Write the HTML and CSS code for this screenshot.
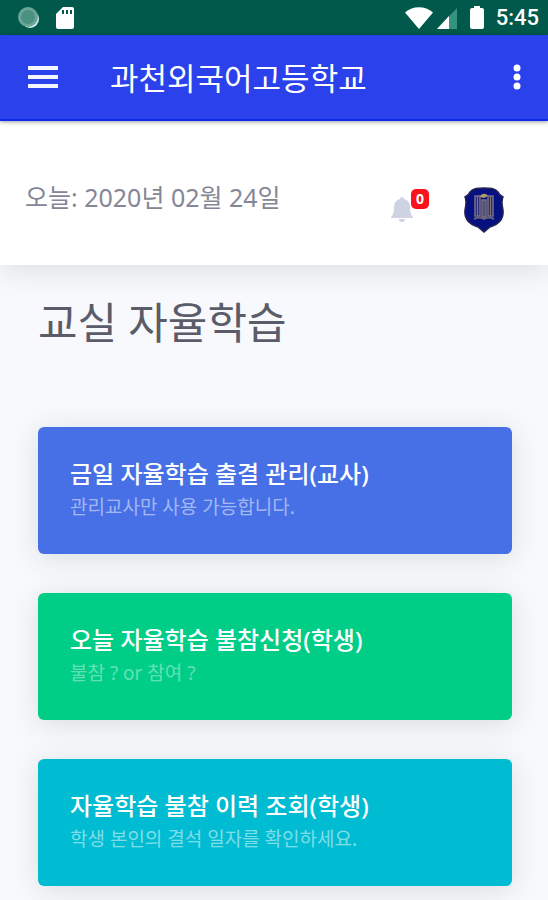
FILE: index.html
```html
<!DOCTYPE html>
<html lang="ko">
	<head>
		<meta charset="utf-8">
		<meta name="viewport" content="width=device-width, initial-scale=1">
		<title>과천외국어고등학교</title>
		<link rel="stylesheet" href="styles.css">
	</head>
	<body>
		<div class="status-bar">
			<svg class="status-icon" width="24" height="24" viewBox="0 0 24 24">
				<circle cx="13" cy="13" r="9" fill="#d3ebe6"/>
				<circle cx="11" cy="11" r="10" fill="#6aa597"/>
				<circle cx="11" cy="11" r="7" fill="#4b9080"/>
			</svg>
			<svg class="status-icon" width="20" height="24" viewBox="0 0 20 24">
				<path d="M8 1h9a2 2 0 0 1 2 2v18a2 2 0 0 1-2 2H3a2 2 0 0 1-2-2V8z" fill="#fff"/>
				<path d="M7 4h2v4H7zM11 4h2v4h-2zM15 4h2v4h-2z" fill="#00594a"/>
			</svg>
			<div class="status-right">
				<svg width="28" height="24" viewBox="0 0 28 24">
					<path d="M0 6.500C8-.5 20-.5 28 6.500L14 23z" fill="#fff"/>
				</svg>
				<svg width="20" height="24" viewBox="0 0 20 24">
					<path d="M20 2v21H0z" fill="#359480"/>
					<path d="M12 10v13H0z" fill="#fff"/>
				</svg>
				<svg class="battery" width="14" height="24" viewBox="0 0 14 24">
					<path d="M4 0h6v2h2a2 2 0 0 1 2 2v17a2 2 0 0 1-2 2H2a2 2 0 0 1-2-2V4a2 2 0 0 1 2-2h2z" fill="#fff"/>
				</svg>
				<span class="clock">5:45</span>
			</div>
		</div>

		<header class="app-bar">
			<button class="icon-button" aria-label="메뉴">
				<svg width="30" height="22" viewBox="0 0 30 22" fill="#f4f5ff">
					<path d="M0 0h30v4H0zM0 9h30v4H0zM0 18h30v4H0z"/>
				</svg>
			</button>
			<h1 class="app-title">과천외국어고등학교</h1>
			<button class="icon-button" aria-label="더보기">
				<svg width="8" height="26" viewBox="0 0 8 26" fill="#fff">
					<circle cx="4" cy="4" r="3.500"/>
					<circle cx="4" cy="13" r="3.500"/>
					<circle cx="4" cy="22" r="3.500"/>
				</svg>
			</button>
		</header>

		<div class="top-panel">
			<span class="today">오늘: 2020년 02월 24일</span>
			<button class="bell" aria-label="알림">
				<svg width="22" height="26" viewBox="0 0 22 26" fill="#ced2e2">
					<path d="M11 0c1 0 2 .8 2 2 4 1 6 4 6 8 0 6 1 8 3 10v1H0v-1c2-2 3-4 3-10 0-4 2-7 6-8 0-1.200 1-2 2-2zM8 22h6a3 3 0 0 1-6 0z"/>
				</svg>
				<span class="badge">0</span>
			</button>
			<a class="crest" href="#" aria-label="내 정보">
				<svg width="40" height="46" viewBox="0 0 40 46">
					<path d="M20 1c6 0 11 0 14 4 1 2 3 4 5 5-2 4-1 8 0 13 1 10-6 15-13 17l-6 5-6-5C7 38 0 33 1 23c1-5 2-9 0-13 2-1 4-3 5-5 3-4 8-4 14-4z" fill="#071080" stroke="#262552" stroke-width="1.500"/>
					<path d="M11 9h5v20h-5zM24 9h5v20h-5zM18 13h4v17h-4z" fill="#2c2d72" stroke="#777083" stroke-width="1.500"/>
					<path d="M13.500 10v18M20 13v17M26.500 10v18" stroke="#827976"/>
					<path d="M10 32c4-2 7-2 10 0 3-2 6-2 10 0" fill="none" stroke="#6d6579" stroke-width="2"/>
					<path d="M16 10c1-4 6-4 8-1l-4 2z" fill="#b29b62"/>
				</svg>
			</a>
		</div>

		<main class="content">
			<h2 class="page-title">교실 자율학습</h2>
			<a class="card card-blue" href="#">
				<span class="card-title">금일 자율학습 출결 관리(교사)</span>
				<span class="card-text">관리교사만 사용 가능합니다.</span>
			</a>
			<a class="card card-green" href="#">
				<span class="card-title">오늘 자율학습 불참신청(학생)</span>
				<span class="card-text">불참 ? or 참여 ?</span>
			</a>
			<a class="card card-cyan" href="#">
				<span class="card-title">자율학습 불참 이력 조회(학생)</span>
				<span class="card-text">학생 본인의 결석 일자를 확인하세요.</span>
			</a>
		</main>
	</body>
</html>
```

FILE: styles.css
```css
* {
	box-sizing: border-box;
}

body {
	margin: 0;
	background-color: #f8f9fc;
	font-family: "Noto Sans", "Noto Sans CJK KR", sans-serif;
}

svg {
	display: block;
}

button {
	padding: 0;
	border: 0;
	background: none;
	cursor: pointer;
}

.status-bar {
	display: flex;
	align-items: center;
	gap: 14px;
	height: 35px;
	padding: 0 9px 0 17px;
	background-color: #00594a;
}
.status-right {
	display: flex;
	align-items: center;
	gap: 4px;
	margin-left: auto;
}
.battery {
	margin-left: 9px;
}
.clock {
	margin-left: 8px;
	color: #fff;
	font: 500 22px/24px Roboto, sans-serif;
}

.app-bar {
	position: relative;
	display: flex;
	align-items: center;
	height: 86px;
	padding: 0 27px 0 28px;
	background-color: #2a41ec;
	border-bottom: 2px solid #0c2bed;
	box-shadow: 0 1px 4px rgba(0, 0, 0, .4);
}
.app-title {
	flex: 1;
	margin: 0 0 0 52px;
	color: #fff;
	font-family: "Noto Sans CJK KR", sans-serif;
	font-size: 31px;
	font-weight: 400;
	line-height: 42px;
}

.top-panel {
	position: relative;
	display: flex;
	align-items: center;
	height: 144px;
	padding: 34px 44px 0 25px;
	background-color: #fff;
	box-shadow: 0 4px 28px rgba(58, 59, 69, .15);
	z-index: -1;
}
.today {
	margin-bottom: 26px;
	color: #858796;
	font-size: 25px;
	line-height: 36px;
}
.bell {
	position: relative;
	margin-left: auto;
}
.badge {
	position: absolute;
	top: -8px;
	left: 20px;
	width: 18px;
	height: 20px;
	border-radius: 5px;
	background-color: #f8141a;
	color: #fff;
	font: bold 14px/19px "Noto Sans", sans-serif;
	text-align: center;
}
.crest {
	margin-left: 51px;
}

.content {
	display: flex;
	flex-direction: column;
	gap: 39px;
	padding: 28px 36px 40px 38px;
}
.page-title {
	margin: 0 0 35px;
	color: #5a5c69;
	font-size: 43px;
	font-weight: 400;
	line-height: 60px;
}
.card {
	display: flex;
	flex-direction: column;
	min-height: 127px;
	padding: 29px 32px;
	border-radius: 6px;
	color: #fff;
	text-decoration: none;
	box-shadow: 0 4px 28px rgba(58, 59, 69, .15);
}
.card-blue {
	background-color: #4770e6;
}
.card-green {
	background-color: #00ce87;
}
.card-cyan {
	background-color: #00bcd2;
}
.card-title {
	font-size: 24px;
	font-weight: 500;
	line-height: 36px;
}
.card-text {
	color: rgba(255, 255, 255, .5);
	font-size: 19px;
	line-height: 31px;
}
.card-green .card-text {
	color: rgba(255, 255, 255, .4);
}
```
